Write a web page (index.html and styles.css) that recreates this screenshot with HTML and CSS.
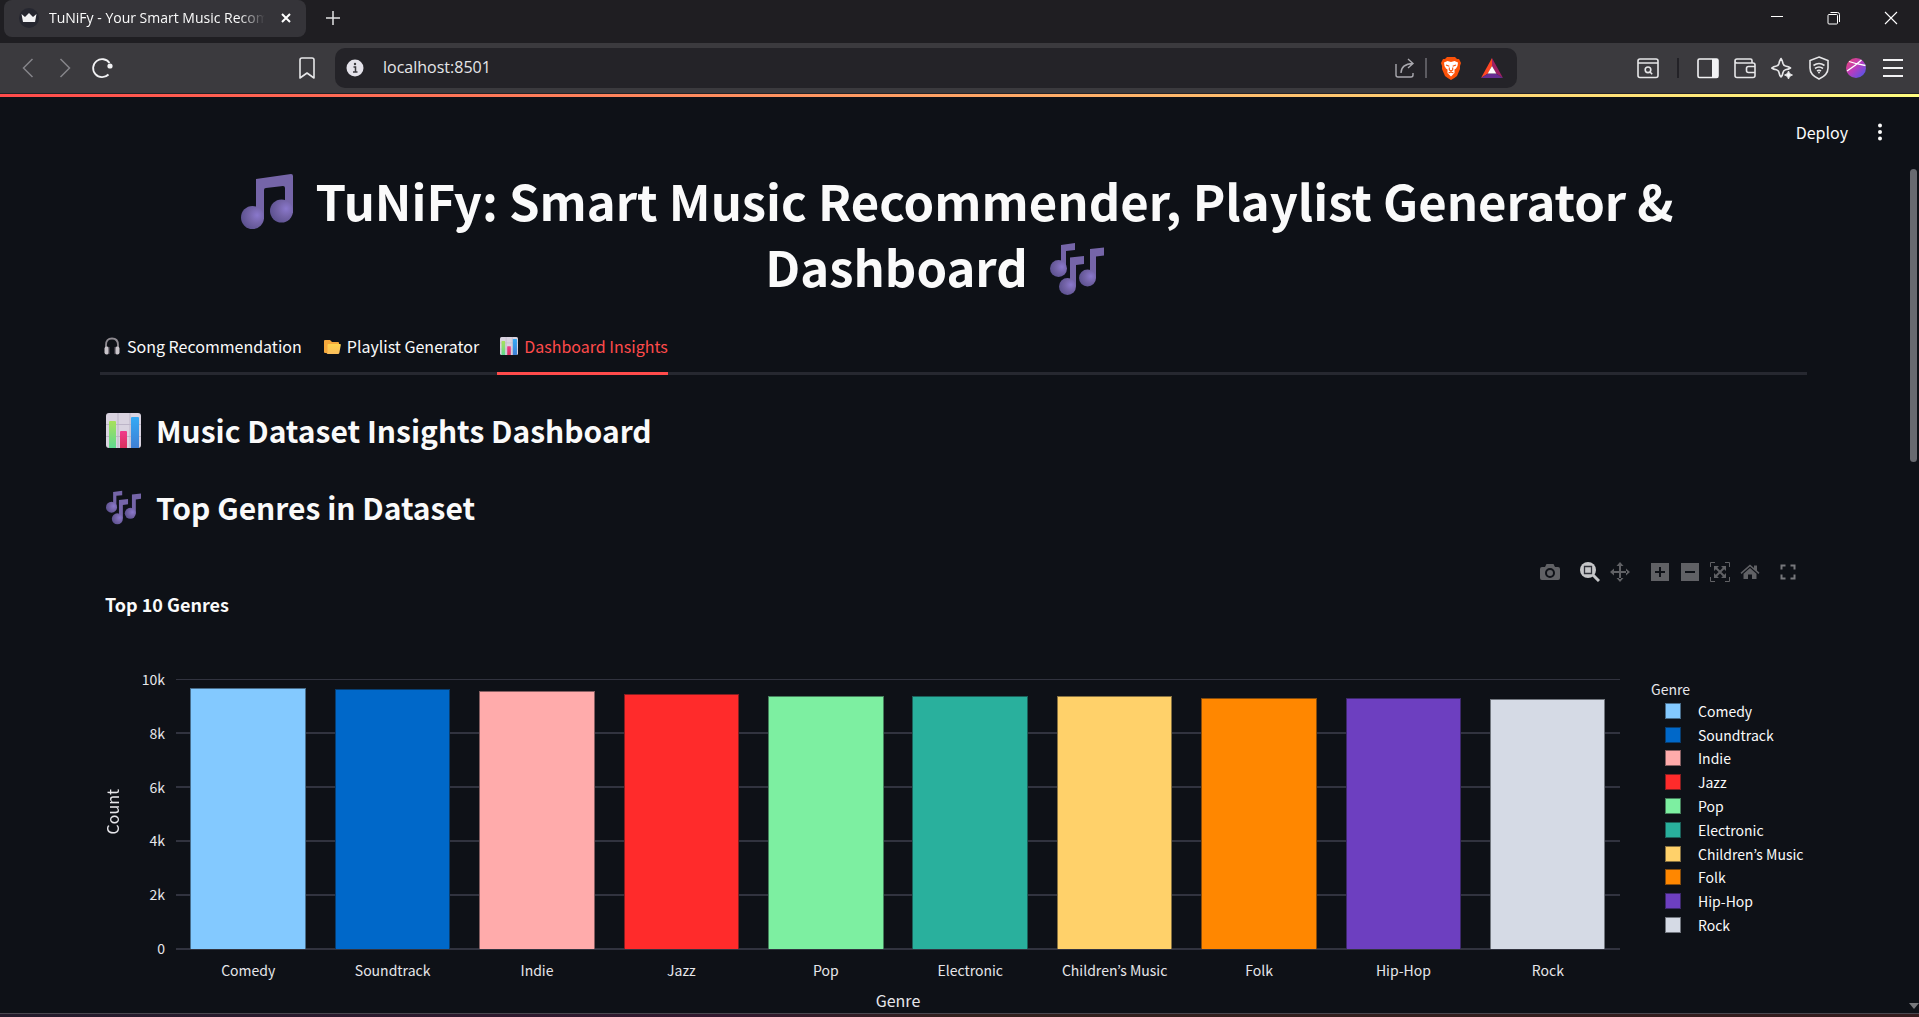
FILE: index.html
```html
<!DOCTYPE html>
<html lang="en">
<head>
<meta charset="utf-8">
<meta name="viewport" content="width=device-width, initial-scale=1">
<title>TuNiFy - Your Smart Music Recommender</title>
<link rel="stylesheet" href="styles.css">
</head>
<body>
<svg class="defs" aria-hidden="true">
  <defs>
    <radialGradient id="head" cx="0.7" cy="0.4" r="0.7"><stop offset="0" stop-color="#8a78cc"/><stop offset="0.5" stop-color="#7464a8"/><stop offset="1" stop-color="#5d5290"/></radialGradient>
    <linearGradient id="green" x1="0" y1="0" x2="0" y2="1"><stop offset="0" stop-color="#a8e05a"/><stop offset="1" stop-color="#5fd890"/></linearGradient>
    <linearGradient id="pink" x1="0" y1="0" x2="0" y2="1"><stop offset="0" stop-color="#f03a8c"/><stop offset="1" stop-color="#d8305c"/></linearGradient>
    <linearGradient id="blue" x1="0" y1="0" x2="0" y2="1"><stop offset="0" stop-color="#35aaf5"/><stop offset="1" stop-color="#3f7fd4"/></linearGradient>
    <linearGradient id="folder" x1="0" y1="0" x2="0" y2="1"><stop offset="0" stop-color="#ffd24d"/><stop offset="1" stop-color="#fbbd5c"/></linearGradient>
    <linearGradient id="avatar" x1="0" y1="0" x2="1" y2="1"><stop offset="0" stop-color="#f0466e"/><stop offset="0.5" stop-color="#b53cc0"/><stop offset="1" stop-color="#3d5cf0"/></linearGradient>
    <symbol id="notes-two" viewBox="0 0 52 55">
      <path d="M15 5 50 0q2 0 2 2v37h-8V14q0-2-2-2l-17 2q-2 0-2 2v29h-8z" fill="#7565a8"/>
      <ellipse cx="11.500" cy="43.500" rx="11.500" ry="11.500" fill="url(#head)"/>
      <ellipse cx="40.500" cy="37" rx="11.500" ry="11.500" fill="url(#head)"/>
    </symbol>
    <symbol id="notes-three" viewBox="0 0 54 52">
      <path d="M11 2 25 0v7l-9 1v18h-5zM20 14.500 34 13v8l-8 1v21h-6zM40 6 54 4.500v8l-8 1V35h-6z" fill="#7565a8"/>
      <circle cx="8.500" cy="25.500" r="8.500" fill="url(#head)"/>
      <circle cx="17.500" cy="43.500" r="8.500" fill="url(#head)"/>
      <circle cx="37.500" cy="35" r="8.500" fill="url(#head)"/>
    </symbol>
    <symbol id="chart" viewBox="0 0 35 35">
      <rect width="35" height="35" rx="3" fill="#d9d3e0"/>
      <path d="M0 11.500h35M0 23.500h35M12 0v35M24 0v35" stroke="#bdb5c8" stroke-width="1"/>
      <path d="M3 9q0-1 1-1h5q1 0 1 1v26H3z" fill="url(#green)"/>
      <path d="M14 19q0-1 1-1h5q1 0 1 1v16h-7z" fill="url(#pink)"/>
      <path d="M25 5q0-1 1-1h6q1 0 1 1v30h-8z" fill="url(#blue)"/>
    </symbol>
  </defs>
</svg>

<header class="browser">
  <div class="tabstrip">
    <div class="tab">
      <svg class="favicon" viewBox="0 0 20 20"><circle cx="10" cy="10" r="10" fill="#262730"/><path d="M2.500 6 6 9 10 5l4 4 3.500-3-1.500 8H4z" fill="#f2f2f4"/></svg>
      <span class="tab-title">TuNiFy - Your Smart Music Recommender</span>
      <button class="icon-button" aria-label="Close tab"><svg width="10" height="10" viewBox="0 0 10 10"><path d="M1 1 9 9M9 1 1 9" stroke="#fff" stroke-width="2"/></svg></button>
    </div>
    <button class="icon-button new-tab" aria-label="New tab"><svg width="14" height="14" viewBox="0 0 14 14"><path d="M7 0v14M0 7h14" stroke="#e2e2e4" stroke-width="1.500"/></svg></button>
    <div class="window-controls">
      <button class="icon-button" aria-label="Minimize"><svg width="14" height="14" viewBox="0 0 14 14"><path d="M1 5.500h12" stroke="#fff"/></svg></button>
      <button class="icon-button" aria-label="Restore"><svg width="14" height="14" viewBox="0 0 14 14" fill="none" stroke="#fff"><rect x="1" y="3.500" width="9.500" height="9.500" rx="1"/><path d="M3.500 1.500h7q2 0 2 2V11" /></svg></button>
      <button class="icon-button" aria-label="Close"><svg width="14" height="14" viewBox="0 0 14 14"><path d="M1 1 13 13M13 1 1 13" stroke="#fff" stroke-width="1.100"/></svg></button>
    </div>
  </div>

  <div class="toolbar">
    <nav class="history">
      <button class="icon-button" aria-label="Back"><svg width="12" height="20" viewBox="0 0 12 20" fill="none" stroke="#85848a" stroke-width="1.500"><path d="M10.500 1 1.500 10l9 9"/></svg></button>
      <button class="icon-button" aria-label="Forward"><svg width="12" height="20" viewBox="0 0 12 20" fill="none" stroke="#85848a" stroke-width="1.500"><path d="M1.500 1l9 9-9 9"/></svg></button>
      <button class="icon-button" aria-label="Reload"><svg width="22" height="22" viewBox="0 0 22 22"><path d="M18.500 6A9 9 0 1 0 17.500 17.500" fill="none" stroke="#f2f2f4" stroke-width="1.800"/><circle cx="19" cy="9" r="2.600" fill="#f2f2f4"/></svg></button>
    </nav>
    <button class="icon-button bookmark" aria-label="Bookmark this page"><svg width="16" height="22" viewBox="0 0 16 22" fill="none" stroke="#e6e6e8" stroke-width="1.600" stroke-linejoin="round"><path d="M1 3q0-2 2-2h10q2 0 2 2v18l-7-5-7 5z"/></svg></button>
    <div class="address">
      <svg width="18" height="18" viewBox="0 0 18 18"><circle cx="9" cy="9" r="8.500" fill="#e4e2ea"/><path d="M7.500 8H9.500v5M7 13h4.500" fill="none" stroke="#3a393e" stroke-width="1.500"/><circle cx="9" cy="5" r="1.200" fill="#3a393e"/></svg>
      <input class="url" type="text" value="localhost:8501" aria-label="Address">
      <button class="icon-button share" aria-label="Share"><svg width="20" height="20" viewBox="0 0 20 20" fill="none" stroke="#a9a8ae" stroke-width="1.400"><path d="M1 6v11q0 2 2 2h13q2 0 2-2v-2M6 15q0-9 12-9.500M13 1l5 4.500-5 4.500"/></svg></button>
      <span class="divider light"></span>
      <button class="icon-button brave" aria-label="Brave Shields"><svg width="20" height="24" viewBox="0 0 20 24"><path d="M6 1h8l2 2h2l2 4-1 3v3l-3 7q-3 2.500-6 4-3-1.500-6-4l-3-7v-3L0 7l2-4h2z" fill="#fb5209"/><path d="M3 6.500 6.500 5 10 6l3.500-1L17 6.500 16.500 10 15 12.500 13.500 13.500V17L10 20.500 6.500 17V13.500L5 12.500 3.500 10z" fill="#fff"/><path d="M5 9l3.300 1.300M15 9l-3.300 1.300M8.300 11.500V14L10 15l1.700-1V11.500M7.500 17 10 16l2.500 1" fill="none" stroke="#fb5209" stroke-width="1.100"/></svg></button>
      <button class="icon-button rewards" aria-label="Brave Rewards"><svg width="22" height="20" viewBox="0 0 22 20"><path d="M11 0 0 20 7 15.500 11 8z" fill="#ff4724"/><path d="M11 0 22 20 15 15.500 11 8z" fill="#9e1f63"/><path d="M0 20H22L15 15.500H7z" fill="#662d91"/><path d="M11 8 15.300 15.500H6.700z" fill="#fff"/></svg></button>
    </div>
    <div class="extensions">
      <button class="icon-button" aria-label="Search tabs"><svg width="22" height="22" viewBox="0 0 22 22" fill="none" stroke="#e6e6e8" stroke-width="1.600"><rect x="1" y="2" width="20" height="18.500" rx="2"/><path d="M1 6h20M13 15l2.200 2.200"/><circle cx="11" cy="12.800" r="2.800"/></svg></button>
      <span class="divider dark"></span>
      <button class="icon-button" aria-label="Side panel"><svg width="22" height="22" viewBox="0 0 22 22"><rect x="1" y="2" width="20" height="18.500" rx="1.500" fill="none" stroke="#f2f2f4" stroke-width="1.600"/><path d="M15 2h6v18.500h-6z" fill="#f2f2f4"/></svg></button>
      <button class="icon-button" aria-label="Wallet"><svg width="22" height="22" viewBox="0 0 22 22" fill="none" stroke="#e6e6e8" stroke-width="1.600"><path d="M18 6V3.500q0-1.500-1.500-1.500H3Q1 2 1 4v14.500q0 2 2 2h16q2 0 2-2V8q0-2-2-2H3Q1 6 1 4"/><path d="M21 9.500h-6.500q-2 0-2 2v2q0 2 2 2H21"/></svg></button>
      <button class="icon-button" aria-label="Leo assistant"><svg width="22" height="22" viewBox="0 0 22 22"><path d="M10 1.500q1.500 2 2 5 .5 2 2.500 2.500 3 .5 5 2-2 1.300-5 1.800-2 .5-2.500 2.700-.5 3-2 4.500-1.500-1.500-2-4.500Q7.500 13.300 5.500 12.800 2.500 12.300.8 11q1.700-1.500 4.700-2Q7.500 8.500 8 6.500q.5-3 2-5z" fill="none" stroke="#e6e6e8" stroke-width="1.600" stroke-linejoin="round"/><circle cx="17.500" cy="18" r="4.500" fill="#3b3a3e"/><path d="M17.500 14q.5 3.200 4 4-3.500.8-4 4-.5-3.200-4-4 3.500-.8 4-4z" fill="#f2f2f4" stroke="#f2f2f4" stroke-width=".8"/></svg></button>
      <button class="icon-button" aria-label="VPN"><svg width="22" height="24" viewBox="0 0 22 24" fill="none" stroke="#e6e6e8" stroke-width="1.600"><path d="M11 1 20 4.500V12q0 7-9 11-9-4-9-11V4.500z"/><path d="M5.500 9.500q5.500-4 11 0M7 12.500q4-3 8 0M9 15q2-1.500 4 0"/><circle cx="11" cy="16.500" r="1" fill="#e6e6e8" stroke="none"/></svg></button>
      <button class="icon-button" aria-label="Profile"><svg width="22" height="22" viewBox="0 0 22 22"><circle cx="11" cy="11" r="10" fill="url(#avatar)"/><path d="M4 4.500Q11 7 20.500 8.500M2 14Q10 9 16.500 3" fill="none" stroke="#fff" stroke-width="1.300"/></svg></button>
      <button class="icon-button" aria-label="Menu"><svg width="22" height="22" viewBox="0 0 22 22"><path d="M1 3h20M1 11h20M1 19h20" stroke="#f2f2f4" stroke-width="1.800"/></svg></button>
    </div>
  </div>
</header>

<div class="app">
  <div class="decoration"></div>
  <div class="app-header">
    <button class="deploy">Deploy</button>
    <button class="icon-button" aria-label="Main menu"><svg width="6" height="18" viewBox="0 0 6 18" fill="#fafafa"><circle cx="3" cy="2.500" r="2"/><circle cx="3" cy="9" r="2"/><circle cx="3" cy="15.500" r="2"/></svg></button>
  </div>

  <main class="content">
    <h1 class="title"><svg class="emoji notes-left"><use href="#notes-two"/></svg>TuNiFy: Smart Music Recommender, Playlist Generator &amp;<br>Dashboard<svg class="emoji notes-right"><use href="#notes-three"/></svg></h1>

    <div class="tabs" role="tablist">
      <button class="page-tab" role="tab" aria-selected="false"><svg class="tab-emoji" viewBox="0 0 18 18"><path d="M3 11V8q0-6.500 6-6.500T15 8v3" fill="none" stroke="#8e8a90" stroke-width="1.800"/><rect x="1.500" y="9.500" width="4.500" height="8" rx="2" fill="#c9c5cb"/><rect x="12" y="9.500" width="4.500" height="8" rx="2" fill="#c9c5cb"/><path d="M6 10v7M12 10v7" stroke="#55505a" stroke-width="1.200"/></svg>Song Recommendation</button>
      <button class="page-tab" role="tab" aria-selected="false"><svg class="tab-emoji" viewBox="0 0 18 18"><path d="M1 4q0-1 1-1h5l2 2h6q1 0 1 1v10H2q-1 0-1-1z" fill="#f5a83c"/><path d="M5.500 7H17q1 0 .8 1l-1.500 8q-.2 1-1.300 1H2.500q2 0 2-1.500V8q0-1 1-1z" fill="url(#folder)"/></svg>Playlist Generator</button>
      <button class="page-tab selected" role="tab" aria-selected="true"><svg class="tab-emoji"><use href="#chart"/></svg>Dashboard Insights</button>
    </div>

    <h2 class="heading"><svg class="heading-emoji"><use href="#chart"/></svg>Music Dataset Insights Dashboard</h2>
    <h2 class="heading"><svg class="heading-emoji"><use href="#notes-three"/></svg>Top Genres in Dataset</h2>

    <section class="figure">
      <div class="modebar">
        <button class="icon-button" aria-label="Download plot as a png"><svg width="20" height="20" viewBox="0 0 20 20"><path d="M2 5h3l1.500-3h7L15 5h3q2 0 2 2v9q0 2-2 2H2q-2 0-2-2V7q0-2 2-2z" fill="#606165"/><circle cx="10" cy="11" r="4" fill="none" stroke="#0e1117" stroke-width="2"/></svg></button>
        <span class="mode-gap"></span>
        <button class="icon-button" aria-label="Zoom"><svg width="20" height="20" viewBox="0 0 20 20"><circle cx="8" cy="8" r="8" fill="#c6c7c9"/><path d="M13 13l6 6" stroke="#c6c7c9" stroke-width="3"/><path d="M4.500 4.500h7v7h-7z" fill="none" stroke="#30323a" stroke-width="1.300"/></svg></button>
        <button class="icon-button" aria-label="Pan"><svg width="20" height="20" viewBox="0 0 20 20" fill="#606165"><path d="M9 3h2v14H9zM3 9h14v2H3zM10 0l3.500 4h-7zM10 20l3.500-4h-7zM0 10l4-3.500v7zM20 10l-4-3.500v7z"/></svg></button>
        <span class="mode-gap"></span>
        <button class="icon-button" aria-label="Zoom in"><svg width="20" height="20" viewBox="0 0 20 20"><path d="M1 1h18v18H1z" fill="#606165"/><path d="M10 5v10M5 10h10" stroke="#0e1117" stroke-width="2"/></svg></button>
        <button class="icon-button" aria-label="Zoom out"><svg width="20" height="20" viewBox="0 0 20 20"><path d="M1 1h18v18H1z" fill="#606165"/><path d="M5 10h10" stroke="#0e1117" stroke-width="2"/></svg></button>
        <button class="icon-button" aria-label="Autoscale"><svg width="20" height="20" viewBox="0 0 20 20"><path d="M.5 5V.5H5M15 .5h4.500V5M19.500 15v4.500H15M5 19.500H.5V15" fill="none" stroke="#606165"/><path d="M6 6l8 8M14 6l-8 8" stroke="#606165" stroke-width="2"/><path d="M4 4h5L4 9zM16 4h-5l5 5zM4 16h5l-5-5zM16 16h-5l5-5z" fill="#606165"/></svg></button>
        <button class="icon-button" aria-label="Reset axes"><svg width="20" height="20" viewBox="0 0 20 20" fill="#606165"><path d="M10 2.500l4 3.500V3.500h3v5l2.500 2.300-1 1.200L10 4.500 1.500 12l-1-1.200z"/><path d="M10 6l6.500 5.700V17h-4.500v-4.500H8V17H3.500v-5.300z"/></svg></button>
        <span class="mode-gap"></span>
        <button class="icon-button" aria-label="Fullscreen"><svg width="16" height="16" viewBox="0 0 16 16"><path d="M1.500 5.500V1.500H5.500M10.500 1.500h4v4M14.500 10.500v4h-4M5.500 14.500h-4v-4" fill="none" stroke="#77787c" stroke-width="2"/></svg></button>
      </div>
      <h3 class="figure-title">Top 10 Genres</h3>

      <div class="chart">
        <div class="y-title"><span>Count</span></div>
        <div class="y-axis"><span>10k</span><span>8k</span><span>6k</span><span>4k</span><span>2k</span><span>0</span></div>
        <div class="plot">
          <div class="bar comedy" style="height:96.81%"></div>
          <div class="bar soundtrack" style="height:96.46%"></div>
          <div class="bar indie" style="height:95.43%"></div>
          <div class="bar jazz" style="height:94.41%"></div>
          <div class="bar pop" style="height:93.86%"></div>
          <div class="bar electronic" style="height:93.77%"></div>
          <div class="bar children" style="height:93.53%"></div>
          <div class="bar folk" style="height:92.99%"></div>
          <div class="bar hiphop" style="height:92.95%"></div>
          <div class="bar rock" style="height:92.72%"></div>
        </div>
        <div class="legend">
          <div class="legend-title">Genre</div>
          <ul class="legend-items">
            <li><i class="swatch comedy"></i>Comedy</li>
            <li><i class="swatch soundtrack"></i>Soundtrack</li>
            <li><i class="swatch indie"></i>Indie</li>
            <li><i class="swatch jazz"></i>Jazz</li>
            <li><i class="swatch pop"></i>Pop</li>
            <li><i class="swatch electronic"></i>Electronic</li>
            <li><i class="swatch children"></i>Children’s Music</li>
            <li><i class="swatch folk"></i>Folk</li>
            <li><i class="swatch hiphop"></i>Hip-Hop</li>
            <li><i class="swatch rock"></i>Rock</li>
          </ul>
        </div>
        <div class="x-axis"><span>Comedy</span><span>Soundtrack</span><span>Indie</span><span>Jazz</span><span>Pop</span><span>Electronic</span><span>Children’s Music</span><span>Folk</span><span>Hip-Hop</span><span>Rock</span></div>
        <div class="x-title">Genre</div>
      </div>
    </section>
  </main>
  <div class="scrollbar"><span class="thumb"></span><span class="arrow"></span></div>
</div>
<div class="window-edge"></div>
</body>
</html>
```
FILE: styles.css
```css
* { box-sizing: border-box; }

body {
  margin: 0;
  height: 100vh;
  display: flex;
  flex-direction: column;
  overflow: hidden;
  background: #0e1117;
  color: #fafafa;
  font-family: "Noto Sans CJK KR", "Source Sans Pro", sans-serif;
  font-size: 16px;
}

button, input {
  margin: 0;
  padding: 0;
  border: 0;
  background: none;
  color: inherit;
  font: inherit;
}

svg { display: block; flex: none; }
.defs { position: absolute; width: 0; height: 0; }
.icon-button { display: flex; align-items: center; justify-content: center; flex: none; }

/* Browser chrome */
.browser { flex: none; font-family: "Open Sans", "Segoe UI", sans-serif; }
.tabstrip { display: flex; height: 43px; padding-left: 4px; background: #1f1e22; }
.tab {
  display: flex;
  align-items: center;
  width: 302px;
  height: 37px;
  padding: 0 15px 2px;
  border-radius: 8px;
  background: #353439;
}
.favicon { width: 20px; height: 20px; }
.tab-title {
  flex: 1;
  margin: 0 16px 0 10px;
  overflow: hidden;
  white-space: nowrap;
  font-size: 14px;
  -webkit-mask-image: linear-gradient(to right, #000 88%, transparent);
  mask-image: linear-gradient(to right, #000 88%, transparent);
}
.new-tab { width: 14px; height: 36px; margin-left: 20px; }
.window-controls { display: flex; gap: 43px; height: 35px; margin-left: auto; padding-right: 21px; }

.toolbar {
  display: flex;
  align-items: center;
  height: 51px;
  padding: 0 15px 0 22px;
  background: #3b3a3e;
  border-bottom: 1px solid #232227;
}
.history { display: flex; align-items: center; gap: 25px; }
.history .icon-button:last-child { margin-left: -5px; }
.bookmark { margin: 0 20px 0 186px; }
.address {
  display: flex;
  align-items: center;
  flex: 1;
  height: 40px;
  padding: 0 14px 0 11px;
  border-radius: 10px;
  background: #242328;
}
.url { flex: 1; margin-left: 19px; padding-bottom: 2px; font-size: 16px; color: #e6e6e8; }
.divider { width: 2px; height: 20px; }
.light { margin: 0 14px 0 10px; background: #5c5b61; }
.dark { background: #232227; }
.rewards { margin-left: 20px; }
.extensions { display: flex; align-items: center; gap: 15px; margin-left: 120px; }
.extensions .dark { margin: 0 3px; }

/* Application */
.app { position: relative; flex: 1; min-height: 0; overflow: hidden; }
.decoration { height: 3px; background: linear-gradient(to right, #ff4b4b, #fffd80); }
.app-header {
  display: flex;
  align-items: center;
  justify-content: flex-end;
  gap: 29px;
  height: 70px;
  padding-right: 36px;
}
.content { padding: 0 112px 0 100px; }

.title {
  margin: 0;
  text-align: center;
  font-size: 49px;
  font-weight: 700;
  line-height: 66px;
}
.emoji { display: inline-block; }
.notes-left { width: 52px; height: 55px; margin: 0 22px 0 8px; vertical-align: -8px; }
.notes-right { width: 54px; height: 52px; margin: 0 38px 0 22px; vertical-align: -8px; }

.tabs { display: flex; gap: 18px; height: 52px; margin-top: 24px; border-bottom: 3px solid #262830; }
.page-tab {
  display: flex;
  align-items: center;
  gap: 6px;
  height: 52px;
  padding: 0 0 4px 3px;
  border-bottom: 3px solid transparent;
  font-size: 16px;
}
.tab-emoji { width: 18px; height: 18px; }
.selected { color: #ff4b4b; border-color: #ff4b4b; }

.heading {
  display: flex;
  align-items: center;
  gap: 15px;
  height: 44px;
  margin: 33px 0 0;
  padding-left: 6px;
  font-size: 30px;
  font-weight: 700;
}
.heading-emoji { width: 35px; height: 35px; }

.figure { padding-top: 33px; }
.modebar { display: flex; gap: 10px; justify-content: flex-end; height: 20px; padding-right: 11px; }
.figure-title { margin: 10px 0 0 5px; font-size: 18px; font-weight: 700; line-height: 24px; }

.chart {
  display: grid;
  grid-template-columns: 24px 52px 1fr 187px;
  grid-template-rows: 271px 40px 34px;
  margin-top: 63px;
  color: #e6e6ea;
  font-size: 14px;
}
.y-title { display: flex; align-items: center; justify-content: center; padding-bottom: 6px; font-size: 16px; }
.y-title span { writing-mode: vertical-rl; transform: rotate(180deg); line-height: 24px; }
.y-axis { display: flex; flex-direction: column; justify-content: space-between; margin: -10px 0 -8px; padding-right: 11px; text-align: right; line-height: 20px; }
.plot {
  display: flex;
  align-items: flex-end;
  justify-content: space-around;
  padding-bottom: 1px;
  background: repeating-linear-gradient(to bottom, #31333f 0 1px, transparent 1px 53px, #31333f 53px 54px);
}
.bar { width: 8%; border: 1px solid #0e111780; border-bottom: 0; background-clip: border-box; }
.x-axis { grid-column: 3; display: flex; padding-top: 10px; line-height: 20px; }
.x-axis span { flex: 1 0 0; text-align: center; white-space: nowrap; }
.x-title { grid-column: 3; text-align: center; font-size: 16px; line-height: 20px; }

.legend { padding: 0 0 0 31px; }
.legend-title { height: 20px; line-height: 20px; }
.legend-items {
  display: grid;
  grid-template-rows: repeat(10, 1fr);
  height: 238px;
  margin: 0;
  padding: 0 0 0 14px;
  list-style: none;
  color: #fafafa;
}
.legend-items li { display: flex; align-items: center; gap: 17px; line-height: 20px; white-space: nowrap; }
.swatch { width: 16px; height: 16px; border: 1px solid #0e111780; }

.comedy { background-color: #83c9ff; }
.soundtrack { background-color: #0068c9; }
.indie { background-color: #ffabab; }
.jazz { background-color: #ff2b2b; }
.pop { background-color: #7defa1; }
.electronic { background-color: #29b09d; }
.children { background-color: #ffd16a; }
.folk { background-color: #ff8700; }
.hiphop { background-color: #6d3fc0; }
.rock { background-color: #d5dae5; }

.scrollbar { position: absolute; top: 75px; right: 2px; bottom: 2px; width: 7px; }
.thumb { position: absolute; top: 0; left: 0; width: 7px; height: 293px; border-radius: 4px; background: #686a70; }
.arrow { position: absolute; bottom: 2px; left: -1px; border: 5px solid transparent; border-top: 6px solid #77787c; border-bottom: 0; }

.window-edge { flex: none; height: 4px; border-top: 1px solid #4a4850; background: linear-gradient(to right, #241c2c, #33192f 38%, #33211e 50%, #351c1e); }
```
